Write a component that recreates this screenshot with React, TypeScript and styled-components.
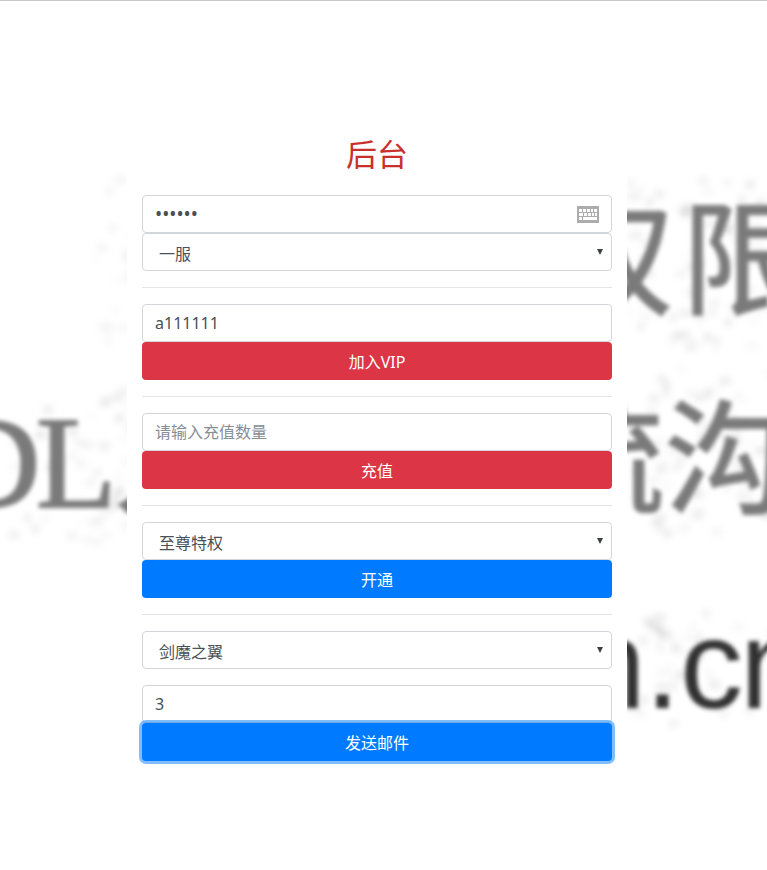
import React from "react";
import styled, { createGlobalStyle, css } from "styled-components";

const GlobalStyle = createGlobalStyle`
  *, *::before, *::after { box-sizing: border-box; }
  body {
    margin: 0;
    background: #fff;
    color: #212529;
    font-family: "Noto Sans", "Noto Sans CJK SC", sans-serif;
    font-size: 16px;
    line-height: 24px;
  }
`;

const Page = styled.div`
  position: relative;
  min-height: 100vh;
  display: flex;
  justify-content: center;
  align-items: flex-start;
  padding: 118px 13px 80px 0;
  border-top: 1px solid #c8c8c8;
  overflow: hidden;
`;

const Backdrop = styled.svg`
  position: absolute;
  inset: 0;
  width: 100%;
  height: 100%;
`;

const Card = styled.main`
  position: relative;
  width: 100%;
  max-width: 500px;
  padding: 15px;
  background: #fff;
`;

const Title = styled.h2`
  margin: 0 0 21px;
  color: #c9302c;
  font-size: 31px;
  font-weight: 400;
  line-height: 40px;
  text-align: center;
`;

const Divider = styled.hr`
  margin: 16px 0;
  border: 0;
  border-top: 1px solid #e4e4e4;
`;

const Form = styled.form`
  display: flex;
  flex-direction: column;
`;

const field = css`
  display: block;
  width: 100%;
  height: 38px;
  border: 1px solid #d3d6d9;
  border-radius: 4px;
  background: #fff;
  color: #495057;
  font: inherit;
  outline: none;
`;

const Field = styled.div<{ $gap?: boolean }>`
  position: relative;
  margin-bottom: ${(p) => (p.$gap ? 16 : 0)}px;
`;

const Input = styled.input`
  ${field}
  padding: 6px 12px;
  &::placeholder { color: #868e96; opacity: 1; }
  &[type="password"] { font-size: 19px; }
`;

const Select = styled.select`
  ${field}
  padding: 8px 24px 4px 16px;
  appearance: none;
`;

const Arrow = styled.svg`
  position: absolute;
  top: 15px;
  right: 9px;
  width: 6px;
  height: 7px;
  pointer-events: none;
`;

const KeyboardButton = styled.button`
  position: absolute;
  top: 11px;
  right: 13px;
  display: flex;
  padding: 0;
  border: 0;
  background: none;
`;

const Button = styled.button<{ $tone: "danger" | "primary"; $ring?: boolean }>`
  position: relative;
  width: 100%;
  height: 38px;
  padding: 7px 12px 5px;
  border: 0;
  border-radius: 4px;
  background: ${(p) => (p.$tone === "danger" ? "#dc3545" : "#007bff")};
  color: #fff;
  font: inherit;
  outline: none;
  box-shadow: ${(p) => (p.$ring ? "0 0 0 3px rgba(0, 123, 255, 0.5)" : "none")};
`;

function KeyboardIcon() {
  return (
    <svg width="22" height="17" viewBox="0 0 22 17" aria-hidden="true">
      <rect width="22" height="17" fill="#acacac" />
      <path
        fill="#fff"
        d="M2 3h3v3H2zM6 3h3v3H6zM10 3h3v3h-3zM14 3h2v3h-2zM17 3h3v3h-3zM2 7h4v3H2zM7 7h3v3H7zM11 7h3v3h-3zM15 7h2v3h-2zM18 7h2v3h-2zM2 11h3v3H2zM6 11h14v3H6z"
      />
    </svg>
  );
}

function SelectField(props: { label: string; option: string; gap?: boolean }) {
  return (
    <Field $gap={props.gap}>
      <Select aria-label={props.label}>
        <option>{props.option}</option>
      </Select>
      <Arrow viewBox="0 0 6 7" aria-hidden="true">
        <path d="M0 1h6L3 7z" fill="#3c4146" />
      </Arrow>
    </Field>
  );
}

function makeSpecks() {
  const zones = [
    [92, 170, 35, 190, 18, 0.03],
    [627, 175, 140, 170, 75, 0.06],
    [0, 385, 127, 155, 55, 0.06],
    [627, 362, 140, 170, 75, 0.06],
    [627, 604, 140, 115, 45, 0.06],
  ];
  let seed = 11;
  const next = () => {
    seed = (seed * 16807) % 2147483647;
    return seed / 2147483647;
  };
  return zones.flatMap(([x, y, w, h, count, strength]) =>
    Array.from({ length: count }, () => ({
      x: x + next() * w,
      y: y + next() * h,
      w: 7 + next() * 6,
      o: 0.01 + next() * strength,
    }))
  );
}

const specks = makeSpecks();

function Wallpaper() {
  return (
    <Backdrop viewBox="0 0 767 870" preserveAspectRatio="xMidYMid slice" aria-hidden="true">
      <defs>
        <filter id="soft" x="-10%" y="-10%" width="120%" height="120%">
          <feGaussianBlur stdDeviation="2" />
        </filter>
        <filter id="haze" x="-10%" y="-10%" width="120%" height="120%">
          <feGaussianBlur stdDeviation="3" />
        </filter>
      </defs>
      <g filter="url(#haze)">
        {specks.map((s, i) => (
          <rect key={i} x={s.x} y={s.y} width={s.w} height="9" fill="#000" opacity={s.o} />
        ))}
      </g>
      <g filter="url(#soft)" fill="#7a7a7a" fontFamily="'Noto Sans CJK SC', sans-serif" fontWeight="500">
        <text x="550" y="304" fontSize="124">权</text>
        <text x="682" y="304" fontSize="124">限</text>
        <text x="541" y="503" fontSize="124">流</text>
        <text x="664" y="503" fontSize="124">沟</text>
        <text x="-55" y="506" fontSize="132" fontWeight="400" fontFamily="'Liberation Serif', serif" stroke="#7a7a7a" strokeWidth="2">D</text>
        <text x="36" y="506" fontSize="132" fontWeight="400" fontFamily="'Liberation Serif', serif" stroke="#7a7a7a" strokeWidth="2">L</text>
        <text x="113" y="503" fontSize="124">人</text>
      </g>
      <g filter="url(#soft)" fill="#333" fontFamily="'Liberation Sans', sans-serif" fontSize="126">
        <text x="541" y="707">m</text>
        <text x="645" y="707">.</text>
        <text x="680" y="707">c</text>
        <text x="740" y="707">n</text>
      </g>
    </Backdrop>
  );
}

export default function App() {
  return (
    <>
      <GlobalStyle />
      <Page>
        <Wallpaper />
        <Card>
          <Title>后台</Title>
          <Form onSubmit={(e) => e.preventDefault()}>
            <Field>
              <Input type="password" aria-label="密码" defaultValue="111111" autoComplete="off" />
              <KeyboardButton type="button" aria-label="键盘">
                <KeyboardIcon />
              </KeyboardButton>
            </Field>
            <SelectField label="区服" option="一服" />
            <Divider />
            <Input type="text" aria-label="账号" defaultValue="a111111" />
            <Button type="button" $tone="danger">加入VIP</Button>
            <Divider />
            <Input type="text" aria-label="充值数量" placeholder="请输入充值数量" />
            <Button type="button" $tone="danger">充值</Button>
            <Divider />
            <SelectField label="特权" option="至尊特权" />
            <Button type="button" $tone="primary">开通</Button>
            <Divider />
            <SelectField label="物品" option="剑魔之翼" gap />
            <Input type="text" aria-label="数量" defaultValue="3" />
            <Button type="button" $tone="primary" $ring>发送邮件</Button>
          </Form>
        </Card>
      </Page>
    </>
  );
}
